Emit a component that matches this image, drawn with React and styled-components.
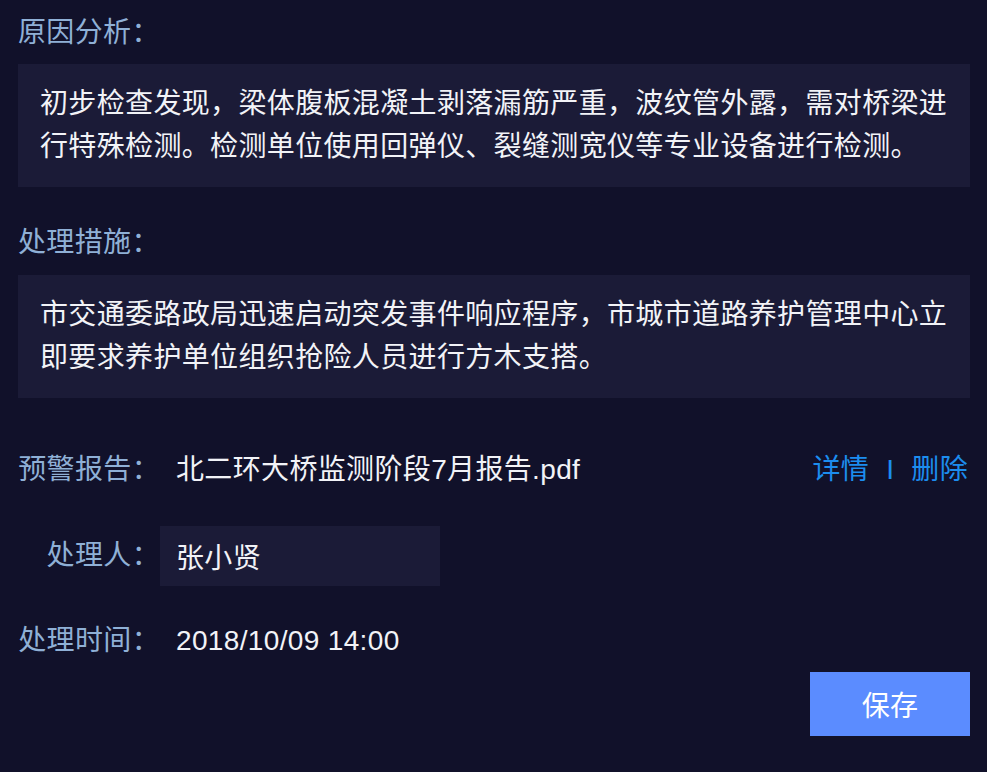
import React from "react";
import styled, { createGlobalStyle } from "styled-components";

const GlobalStyle = createGlobalStyle`
  html, body {
    margin: 0;
    padding: 0;
    background: #11112a;
  }
  body {
    font-family: "Liberation Sans", "Noto Sans CJK SC", sans-serif;
    -webkit-font-smoothing: antialiased;
  }
`;

const Page = styled.div`
  width: 987px;
  height: 772px;
  box-sizing: border-box;
  padding: 13px 17px 0 18px;
  background: #11112a;
  font-size: 28px;
  letter-spacing: 0.35px;
  overflow: hidden;
`;

const Section = styled.section`
  display: flex;
  flex-direction: column;
  margin-top: ${(p) => p.$top || 0}px;
`;

const SectionLabel = styled.div`
  color: #8fb0d6;
  line-height: 40px;
  margin-bottom: ${(p) => p.$gap || 12}px;
`;

const TextBox = styled.div`
  background: #1b1b37;
  color: #f2f3f7;
  line-height: 43px;
  padding: 18px 22px 19px;
`;

const Row = styled.div`
  display: grid;
  grid-template-columns: 142px 1fr auto;
  align-items: center;
  margin-top: ${(p) => p.$top || 0}px;
`;

const RowLabel = styled.div`
  color: #8fb0d6;
  justify-self: end;
  white-space: nowrap;
  line-height: 40px;
`;

const Value = styled.div`
  color: #f2f3f7;
  line-height: 40px;
  padding-left: 16px;
  white-space: nowrap;
`;

const Field = styled.div`
  width: 280px;
  height: 60px;
  box-sizing: border-box;
  background: #1b1b37;
  color: #f2f3f7;
  display: flex;
  align-items: center;
  padding-left: 16px;
`;

const Links = styled.div`
  display: flex;
  align-items: center;
  padding-right: 2px;
`;

const LinkText = styled.a`
  color: #1c8def;
  cursor: pointer;
  line-height: 40px;
`;

const Divider = styled.span`
  color: #1c8def;
  margin: 0 17px;
  line-height: 40px;
`;

const Footer = styled.div`
  display: flex;
  justify-content: flex-end;
  margin-top: 11px;
`;

const SaveButton = styled.button`
  width: 160px;
  height: 64px;
  border: none;
  background: #5b8cff;
  color: #ffffff;
  font-family: inherit;
  font-size: 28px;
  letter-spacing: 0.35px;
  cursor: pointer;
`;

export default function App() {
  return (
    <>
      <GlobalStyle />
      <Page>
        <Section>
          <SectionLabel $gap={11}>原因分析：</SectionLabel>
          <TextBox>
            初步检查发现，梁体腹板混凝土剥落漏筋严重，波纹管外露，需对桥梁进行特殊检测。检测单位使用回弹仪、裂缝测宽仪等专业设备进行检测。
          </TextBox>
        </Section>
        <Section $top={36}>
          <SectionLabel $gap={12}>处理措施：</SectionLabel>
          <TextBox>
            市交通委路政局迅速启动突发事件响应程序，市城市道路养护管理中心立即要求养护单位组织抢险人员进行方木支搭。
          </TextBox>
        </Section>
        <Row $top={52}>
          <RowLabel>预警报告：</RowLabel>
          <Value>北二环大桥监测阶段7月报告.pdf</Value>
          <Links>
            <LinkText>详情</LinkText>
            <Divider>I</Divider>
            <LinkText>删除</LinkText>
          </Links>
        </Row>
        <Row $top={36}>
          <RowLabel>处理人：</RowLabel>
          <Field>张小贤</Field>
        </Row>
        <Row $top={35}>
          <RowLabel>处理时间：</RowLabel>
          <Value>2018/10/09 14:00</Value>
        </Row>
        <Footer>
          <SaveButton>保存</SaveButton>
        </Footer>
      </Page>
    </>
  );
}
